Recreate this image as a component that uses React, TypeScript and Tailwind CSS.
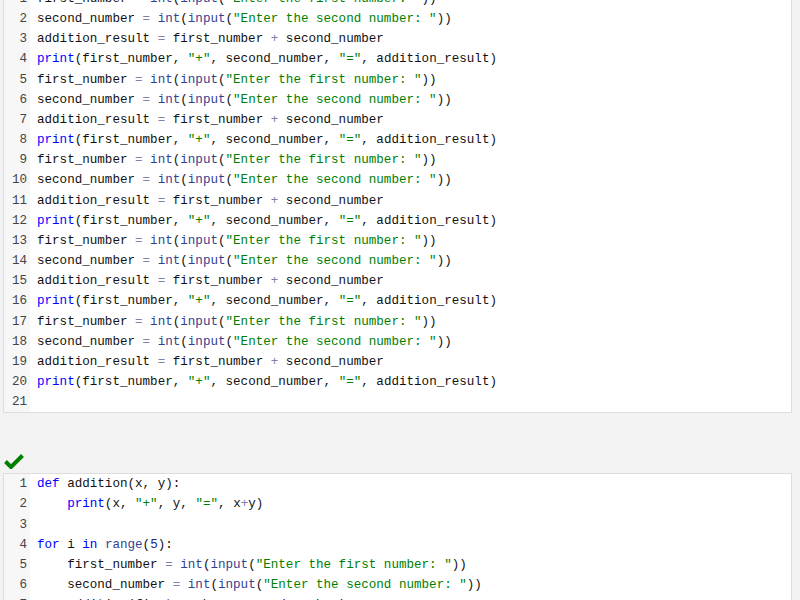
const first = [
  'first_number = int(input("Enter the first number: "))',
  'second_number = int(input("Enter the second number: "))',
  "addition_result = first_number + second_number",
  'print(first_number, "+", second_number, "=", addition_result)',
];

const topLines = [...first, ...first, ...first, ...first, ...first, ""];

const bottomLines = [
  "def addition(x, y):",
  '    print(x, "+", y, "=", x+y)',
  "",
  "for i in range(5):",
  '    first_number = int(input("Enter the first number: "))',
  '    second_number = int(input("Enter the second number: "))',
  "    addition(first_number, second_number)",
  "",
];

const tokenRe =
  /("[^"]*")|\b(def|for|in|print)\b|\b(int|input|range)\b|\b(\d+)\b|([=+])|(\s+|\w+|.)/g;

function highlight(line: string) {
  const out: React.ReactNode[] = [];
  let m: RegExpExecArray | null;
  let i = 0;
  tokenRe.lastIndex = 0;
  while ((m = tokenRe.exec(line))) {
    if (m[1]) out.push(<span key={i++} className="text-[#008000]">{m[1]}</span>);
    else if (m[2]) out.push(<span key={i++} className="text-[#0000ff]">{m[2]}</span>);
    else if (m[3]) out.push(<span key={i++} className="text-[#333f8f]">{m[3]}</span>);
    else if (m[4]) out.push(<span key={i++} className="text-[#1a2a80]">{m[4]}</span>);
    else if (m[5]) out.push(<span key={i++} className="text-[#8080a8]">{m[5]}</span>);
    else out.push(<span key={i++}>{m[6]}</span>);
  }
  return out;
}

function CodeBox({ lines, className }: { lines: string[]; className?: string }) {
  return (
    <div className={`ml-[3px] mr-[8px] flex border border-[#dddddd] bg-white ${className ?? ""}`}>
      <div className="w-[26px] shrink-0 bg-[#f7f7f7] pr-[3px] text-right text-[#444]">
        {lines.map((_, n) => (
          <div key={n} className="h-[20.17px] leading-[20.17px]">
            {n + 1}
          </div>
        ))}
      </div>
      <div className="flex-1 whitespace-pre pl-[7px] text-[#111]">
        {lines.map((l, n) => (
          <div key={n} className="h-[20.17px] leading-[20.17px]">
            {highlight(l)}
          </div>
        ))}
      </div>
    </div>
  );
}

export default function App() {
  return (
    <div className="h-[600px] overflow-hidden bg-[#f3f3f3] font-['Liberation_Mono',monospace] text-[12.57px]">
      <CodeBox lines={topLines} className="-mt-[12px]" />
      <div className="h-[40px]" />
      <div className="flex h-[20px] items-start pl-[4px] pt-[1px]">
        <svg width="20" height="15" viewBox="0 0 20 15">
          <path d="M1.5 7.5 L7 13 L18.5 1.5" fill="none" stroke="#008000" strokeWidth="4" />
        </svg>
      </div>
      <CodeBox lines={bottomLines} />
    </div>
  );
}
